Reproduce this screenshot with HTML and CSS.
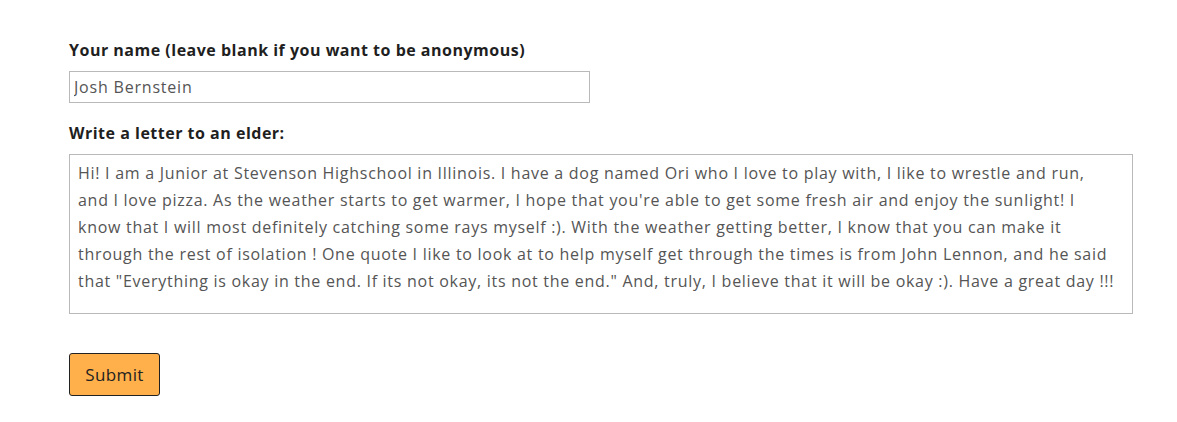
FILE: index.html
```html
<!DOCTYPE html>
<html lang="en">
<head>
    <meta charset="UTF-8">
    <meta name="viewport" content="width=device-width, initial-scale=1.0">
    <title>Letters to Elders</title>
    <link rel="stylesheet" href="styles.css">
</head>
<body>
    <form class="letter-form">
        <label class="field-label" for="name">Your name (leave blank if you want to be anonymous)</label>
        <input class="name-input" type="text" id="name" value="Josh Bernstein">

        <label class="field-label" for="letter">Write a letter to an elder:</label>
        <textarea class="letter-input" id="letter" wrap="off">Hi! I am a Junior at Stevenson Highschool in Illinois. I have a dog named Ori who I love to play with, I like to wrestle and run,
and I love pizza. As the weather starts to get warmer, I hope that you're able to get some fresh air and enjoy the sunlight! I
know that I will most definitely catching some rays myself :). With the weather getting better, I know that you can make it
through the rest of isolation ! One quote I like to look at to help myself get through the times is from John Lennon, and he said
that "Everything is okay in the end. If its not okay, its not the end." And, truly, I believe that it will be okay :). Have a great day !!!</textarea>

        <button class="submit-btn" type="button">Submit</button>
    </form>
</body>
</html>
```

FILE: styles.css
```css
body {
    margin: 0;
    font-family: "Open Sans", Lato, sans-serif;
    background-color: #fff;
    color: #222;
}
.letter-form {
    display: flex;
    flex-direction: column;
    align-items: flex-start;
    padding: 39px 69px 0 69px;
}
.field-label {
    font-size: 16px;
    font-weight: bold;
    letter-spacing: 0.5px;
    color: #1f1f1f;
    line-height: 22px;
    margin-bottom: 10px;
}
.name-input {
    box-sizing: border-box;
    width: 521px;
    height: 32px;
    border: 1px solid #b9b9b9;
    border-radius: 0;
    padding: 0 4px;
    font-family: inherit;
    font-size: 16px;
    letter-spacing: 0.8px;
    color: #555;
    margin: 0 0 19px 0;
}
.letter-input {
    box-sizing: border-box;
    width: 1064px;
    height: 160px;
    border: 1px solid #b9b9b9;
    border-radius: 0;
    padding: 5px 8px 5px 8px;
    font-family: inherit;
    font-size: 16px;
    letter-spacing: 0.72px;
    line-height: 27px;
    color: #555;
    resize: none;
    overflow: hidden;
    margin: 0 0 39px 0;
}
.submit-btn {
    box-sizing: border-box;
    width: 91px;
    height: 43px;
    background-color: #ffb04a;
    border: 1px solid #222;
    border-radius: 3px;
    font-family: inherit;
    font-size: 17px;
    letter-spacing: 0.4px;
    color: #222;
    cursor: pointer;
}
.submit-btn:hover {
    background-color: #f5a33a;
}
```
